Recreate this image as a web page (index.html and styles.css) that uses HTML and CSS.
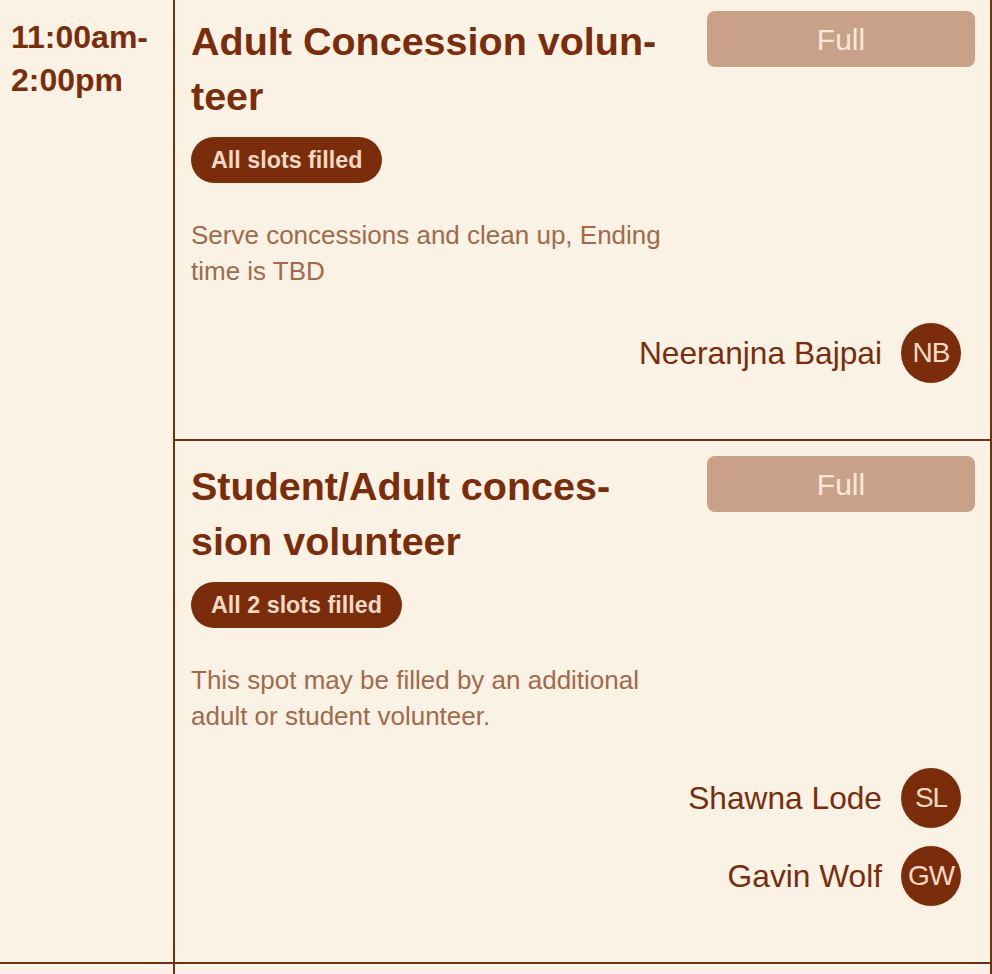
FILE: index.html
```html
<!DOCTYPE html>
<html lang="en">
<head>
<meta charset="utf-8">
<title>Volunteer schedule</title>
<link rel="stylesheet" href="styles.css">
</head>
<body>
<div class="schedule">
  <section class="block">
    <div class="time">11:00am-<br>2:00pm</div>
    <div class="slots">
      <article class="slot">
        <div class="slot-head">
          <div class="slot-info">
            <h2 class="slot-title">Adult Concession volun&shy;teer</h2>
            <span class="badge">All slots filled</span>
            <p class="desc">Serve concessions and clean up, Ending time is TBD</p>
          </div>
          <button class="btn-full" type="button" disabled>Full</button>
        </div>
        <ul class="people">
          <li class="person"><span class="name">Neeranjna Bajpai</span><span class="avatar">NB</span></li>
        </ul>
      </article>
      <article class="slot">
        <div class="slot-head">
          <div class="slot-info">
            <h2 class="slot-title">Student/Adult conces&shy;sion volunteer</h2>
            <span class="badge">All 2 slots filled</span>
            <p class="desc">This spot may be filled by an additional adult or student volunteer.</p>
          </div>
          <button class="btn-full" type="button" disabled>Full</button>
        </div>
        <ul class="people">
          <li class="person"><span class="name">Shawna Lode</span><span class="avatar">SL</span></li>
          <li class="person"><span class="name">Gavin Wolf</span><span class="avatar">GW</span></li>
        </ul>
      </article>
    </div>
  </section>
  <section class="block">
    <div class="time"></div>
    <div class="slots"><article class="slot slot-empty"></article></div>
  </section>
</div>
</body>
</html>
```

FILE: styles.css
```css
* { box-sizing: border-box; }

html, body {
  margin: 0;
  padding: 0;
  background: #faf2e4;
  overflow: hidden;
}

body {
  font-family: "Liberation Sans", Arial, Helvetica, sans-serif;
  color: #7b2d0b;
}

.schedule {
  margin-top: -4px;
}

.block {
  display: grid;
  grid-template-columns: 175px 1fr;
  border-bottom: 2px solid #6e3312;
}

.time {
  border-right: 2px solid #6e3312;
  padding: 20px 0 0 11px;
  font-size: 32px;
  line-height: 43px;
  font-weight: 700;
  color: #7b2d0b;
}

.slots {
  border-right: 2px solid #6e3312;
}

.slot {
  padding: 15px 15px 56px 16px;
}

.slot + .slot {
  border-top: 2px solid #6e3312;
}

.slot-empty {
  height: 120px;
}

.slot-head {
  display: flex;
  align-items: flex-start;
  justify-content: space-between;
}

.slot-info {
  flex: 0 0 482px;
  min-width: 0;
}

.slot-title {
  margin: 3px 0 0;
  font-size: 39.5px;
  line-height: 55px;
  font-weight: 700;
  color: #7b2d0b;
  hyphens: manual;
}

.badge {
  display: inline-block;
  margin-top: 13px;
  padding: 10px 20px;
  border-radius: 23px;
  background: #7b2d0b;
  color: #f3dac4;
  font-size: 23.3px;
  line-height: 26px;
  font-weight: 700;
}

.desc {
  margin: 34px 0 0;
  font-size: 26px;
  line-height: 36px;
  color: #a26a4b;
}

.btn-full {
  flex: 0 0 268px;
  height: 56px;
  border: none;
  border-radius: 8px;
  background: #c9a188;
  color: #f7e9d8;
  font-family: inherit;
  font-size: 30px;
  line-height: 58px;
  padding: 0;
}

.people {
  list-style: none;
  margin: 34px 0 0;
  padding: 0 14px 0 0;
  display: flex;
  flex-direction: column;
  align-items: flex-end;
  gap: 18px;
}

.person {
  display: flex;
  align-items: center;
  gap: 19px;
}

.name {
  font-size: 31.7px;
  color: #7b2d0b;
}

.avatar {
  width: 60px;
  height: 60px;
  border-radius: 50%;
  background: #7b2d0b;
  color: #f3dac4;
  font-size: 28px;
  display: flex;
  align-items: center;
  justify-content: center;
  letter-spacing: -1px;
}
```
